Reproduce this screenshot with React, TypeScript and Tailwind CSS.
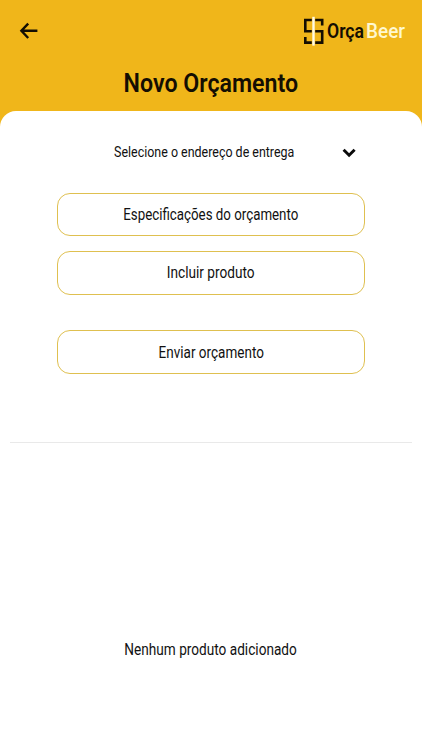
import React from "react";

function BackArrow() {
  return (
    <svg className="h-[18px] w-[20px]" viewBox="0 0 20 18" fill="none" stroke="#140e02" strokeWidth="2.4">
      <path d="M9.2 1.6 2.4 8.8l6.8 7.2M2.6 8.8H18.4" />
    </svg>
  );
}

function LogoMark() {
  return (
    <svg className="h-[30px] w-[20px] shrink-0" viewBox="0 0 20 30" fill="none">
      <path
        d="M18.2 9.6V4H1.3V15.2H18.2V26.6H1.3V21"
        stroke="#140e02"
        strokeWidth="2.6"
      />
      <path d="M9.5 0.8V29.6" stroke="#f0b61a" strokeWidth="3.4" />
      <path d="M9.5 0.8V29.6" stroke="#fffbe6" strokeWidth="2.4" />
    </svg>
  );
}

function Chevron() {
  return (
    <svg className="mt-[2px] h-[10px] w-[14px]" viewBox="0 0 14 10" fill="none" stroke="#0b0b0b" strokeWidth="3">
      <path d="M1.6 1.8 7.1 7.2 12.6 1.8" />
    </svg>
  );
}

function Action({ children, className }: { children: React.ReactNode; className: string }) {
  return (
    <button
      className={`flex w-[308px] items-center justify-center rounded-[13px] border-[1.3px] border-[#dfc050] text-[17px] leading-[20px] whitespace-nowrap ${className}`}
    >
      {children}
    </button>
  );
}

export default function App() {
  return (
    <div className="flex h-[750px] w-[422px] flex-col overflow-hidden bg-[#f0b61a] font-['Roboto',sans-serif] text-[#111111]">
      <header className="flex h-[111px] shrink-0 flex-col">
        <div className="flex h-[62px] items-center justify-between pr-[18px] pl-[19px]">
          <BackArrow />
          <div className="flex w-[100.5px] items-center">
            <LogoMark />
            <div className="ml-[3.5px] flex items-baseline text-[20.5px] leading-[24px] font-semibold whitespace-nowrap text-[#140e02]">
              <span className="w-[38.5px]">
                <span className="inline-block origin-left scale-x-[0.86]">Orça</span>
              </span>
              <span className="inline-block origin-left scale-x-[0.925] font-medium text-[#fff8d0]">Beer</span>
            </div>
          </div>
        </div>
        <h1 className="mt-[6px] text-center text-[26px] leading-[30px] font-semibold text-[#140e02]">
          <span className="inline-block scale-x-[0.892]">Novo Orçamento</span>
        </h1>
      </header>
      <main className="flex flex-1 flex-col items-center rounded-t-[16px] bg-white">
        <div className="mt-[31px] flex h-[20px] w-full items-center pl-[57px] text-[15.5px] leading-[20px]">
          <span className="flex w-[285px] justify-center pl-[9px]">
            <span className="inline-block shrink-0 scale-x-[0.803] whitespace-nowrap">
              Selecione o endereço de entrega
            </span>
          </span>
          <Chevron />
        </div>
        <Action className="mt-[31px] h-[43px] pb-[2px]">
          <span className="scale-x-[0.783]">Especificações do orçamento</span>
        </Action>
        <Action className="mt-[15px] h-[44px] pb-[2px]">
          <span className="scale-x-[0.803]">Incluir produto</span>
        </Action>
        <Action className="mt-[35px] h-[44px]">
          <span className="scale-x-[0.795]">Enviar orçamento</span>
        </Action>
        <hr className="mt-[68px] w-[402px] border-[#e9e9e9]" />
        <p className="mt-[196px] text-[17px] leading-[20px]">
          <span className="inline-block scale-x-[0.802]">Nenhum produto adicionado</span>
        </p>
      </main>
    </div>
  );
}
